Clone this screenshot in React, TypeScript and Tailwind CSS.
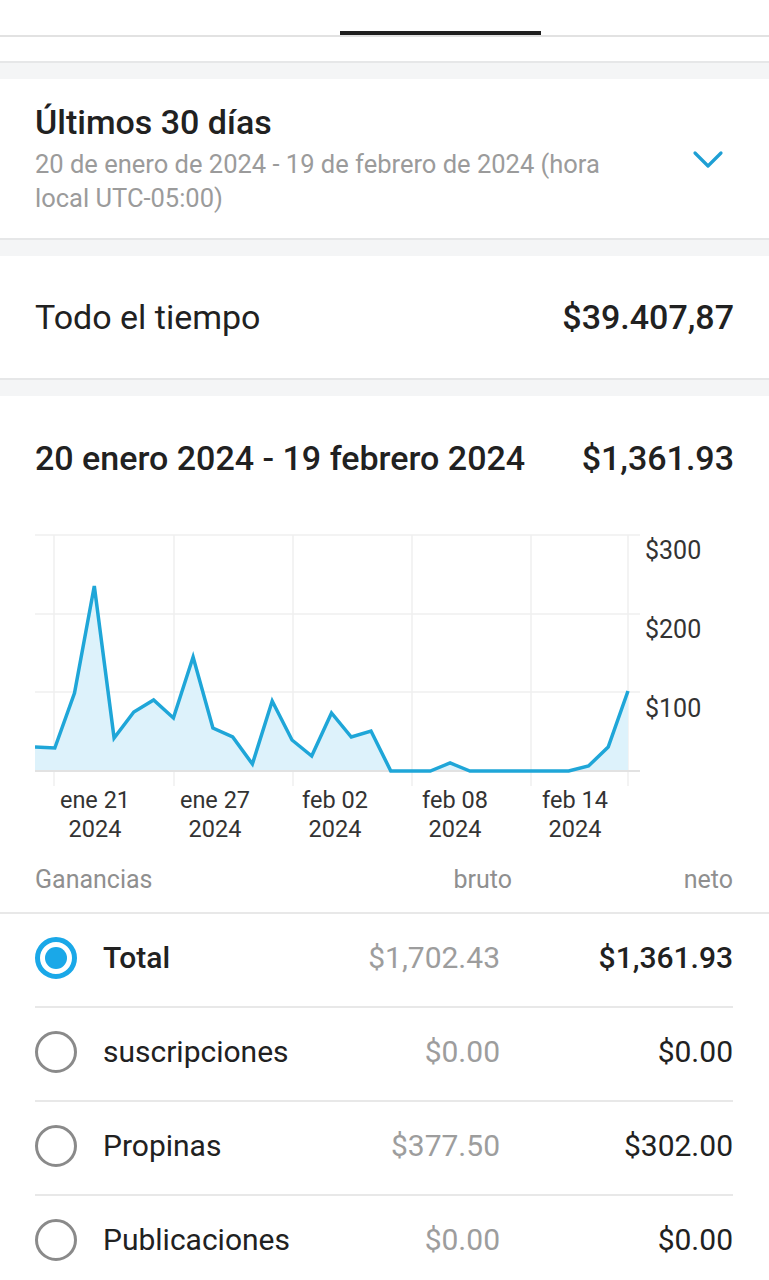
// chart points, in px: x from left of plot, y from top of plot (baseline = 241)
const ys = [
  217, 218, 163, 56, 208, 182, 170, 188, 127, 198, 207, 234, 171, 210, 226, 183,
  207, 201, 241, 241, 241, 233, 241, 241, 241, 241, 241, 241, 236, 217, 161,
];
const base = 241;
const step = 593 / 30;
const pts = ys.map((y, i) => [i * step, y] as const);
const linePath = pts.map(([x, y], i) => `${i ? "L" : "M"}${x.toFixed(1)} ${y}`).join(" ");
const areaPath = `${linePath} L${pts[pts.length - 1][0].toFixed(1)} ${base} L0 ${base} Z`;

const ticks = [
  { d: "ene 21", y: "2024" },
  { d: "ene 27", y: "2024" },
  { d: "feb 02", y: "2024" },
  { d: "feb 08", y: "2024" },
  { d: "feb 14", y: "2024" },
];

const rows = [
  { name: "Total", gross: "$1,702.43", net: "$1,361.93", active: true },
  { name: "suscripciones", gross: "$0.00", net: "$0.00" },
  { name: "Propinas", gross: "$377.50", net: "$302.00" },
  { name: "Publicaciones", gross: "$0.00", net: "$0.00" },
];

function Band() {
  return <div className="h-[18px] bg-[#f4f5f6] border-t-2 border-[#e6e7e8]" />;
}

function Radio({ active }: { active?: boolean }) {
  if (active) {
    return (
      <div className="w-[42px] h-[42px] rounded-full border-[5px] border-[#1aa8e8] flex items-center justify-center shrink-0">
        <div className="w-[22px] h-[22px] rounded-full bg-[#1aa8e8]" />
      </div>
    );
  }
  return <div className="w-[42px] h-[42px] rounded-full border-[3px] border-[#8a8a8a] shrink-0" />;
}

export default function App() {
  return (
    <div className="w-[769px] h-[1280px] overflow-hidden bg-white font-['Roboto',sans-serif] text-[#212121]">
      {/* tab strip */}
      <div className="h-[37px] flex items-end pl-[340px] border-b-2 border-[#e2e2e2]">
        <div className="w-[201px] h-[4px] bg-[#1f1f1f]" />
      </div>
      <div className="h-[24px]" />
      <Band />

      {/* period picker */}
      <div className="flex items-center pl-[35px] pr-[45px] pt-[26px] pb-[23px]">
        <div className="flex-1">
          <div className="text-[34px] leading-[34px] font-medium">Últimos 30 días</div>
          <div className="mt-[8px] w-[600px] text-[25.5px] leading-[34px] text-[#9b9b9b]">
            20 de enero de 2024 - 19 de febrero de 2024 (hora local UTC-05:00)
          </div>
        </div>
        <svg width="32" height="20" viewBox="0 0 32 20" className="shrink-0">
          <polyline points="3,3 16,16 29,3" fill="none" stroke="#1e9fd4" strokeWidth="3.2" strokeLinecap="round" strokeLinejoin="round" />
        </svg>
      </div>
      <Band />

      {/* all time */}
      <div className="h-[122px] flex items-center justify-between px-[35px] text-[34px]">
        <span>Todo el tiempo</span>
        <span className="font-medium">$39.407,87</span>
      </div>
      <Band />

      {/* period total */}
      <div className="flex items-center justify-between px-[35px] pt-[44px] text-[34px] leading-[36px] font-medium">
        <span>20 enero 2024 - 19 febrero 2024</span>
        <span>$1,361.93</span>
      </div>

      {/* chart */}
      <div className="mt-[54px] flex pl-[35px]">
        <svg width="605" height="256" className="shrink-0">
          {[5, 84, 162].map((y) => (
            <line key={y} x1="0" x2="605" y1={y} y2={y} stroke="#efefef" strokeWidth="1.5" />
          ))}
          {[19, 139, 258, 377, 496, 593].map((x) => (
            <line key={x} x1={x} x2={x} y1="5" y2="256" stroke="#efefef" strokeWidth="1.5" />
          ))}
          <path d={areaPath} fill="#ddf2fb" />
          <line x1="0" x2="605" y1={base} y2={base} stroke="#e2e2e2" strokeWidth="2" />
          <path d={linePath} fill="none" stroke="#1fa6d8" strokeWidth="3.5" strokeLinejoin="miter" />
        </svg>
        <div className="pl-[5px] pt-[7px] flex flex-col gap-[52px] text-[25px] leading-[27px] text-[#333]">
          <span>$300</span>
          <span>$200</span>
          <span>$100</span>
        </div>
      </div>
      <div className="ml-[35px] w-[600px] grid grid-cols-5 text-center text-[23.5px] leading-[29px] text-[#333]">
        {ticks.map((t) => (
          <div key={t.d}>
            <div>{t.d}</div>
            <div>{t.y}</div>
          </div>
        ))}
      </div>

      {/* breakdown */}
      <div className="mt-[22px] flex items-center px-[35px] pr-[36px] pb-[18px] text-[25px] leading-[28px] text-[#8f8f8f] border-b-2 border-[#e8e8e8]">
        <span className="flex-1">Ganancias</span>
        <span className="w-[212px] text-right">bruto</span>
        <span className="w-[221px] text-right">neto</span>
      </div>
      <div className="ml-[35px] pr-[36px]">
        {rows.map((r, i) => (
          <div
            key={r.name}
            className={`flex items-center pb-[5px] text-[30px] ${i ? "h-[94px] border-t-2 border-[#e8e8e8]" : "h-[92px]"}`}
          >
            <Radio active={r.active} />
            <span className={`flex-1 ml-[26px] ${r.active ? "font-medium" : ""}`}>{r.name}</span>
            <span className="w-[200px] text-right text-[#9d9d9d]">{r.gross}</span>
            <span className={`w-[233px] text-right ${r.active ? "font-medium" : ""}`}>{r.net}</span>
          </div>
        ))}
      </div>
    </div>
  );
}
